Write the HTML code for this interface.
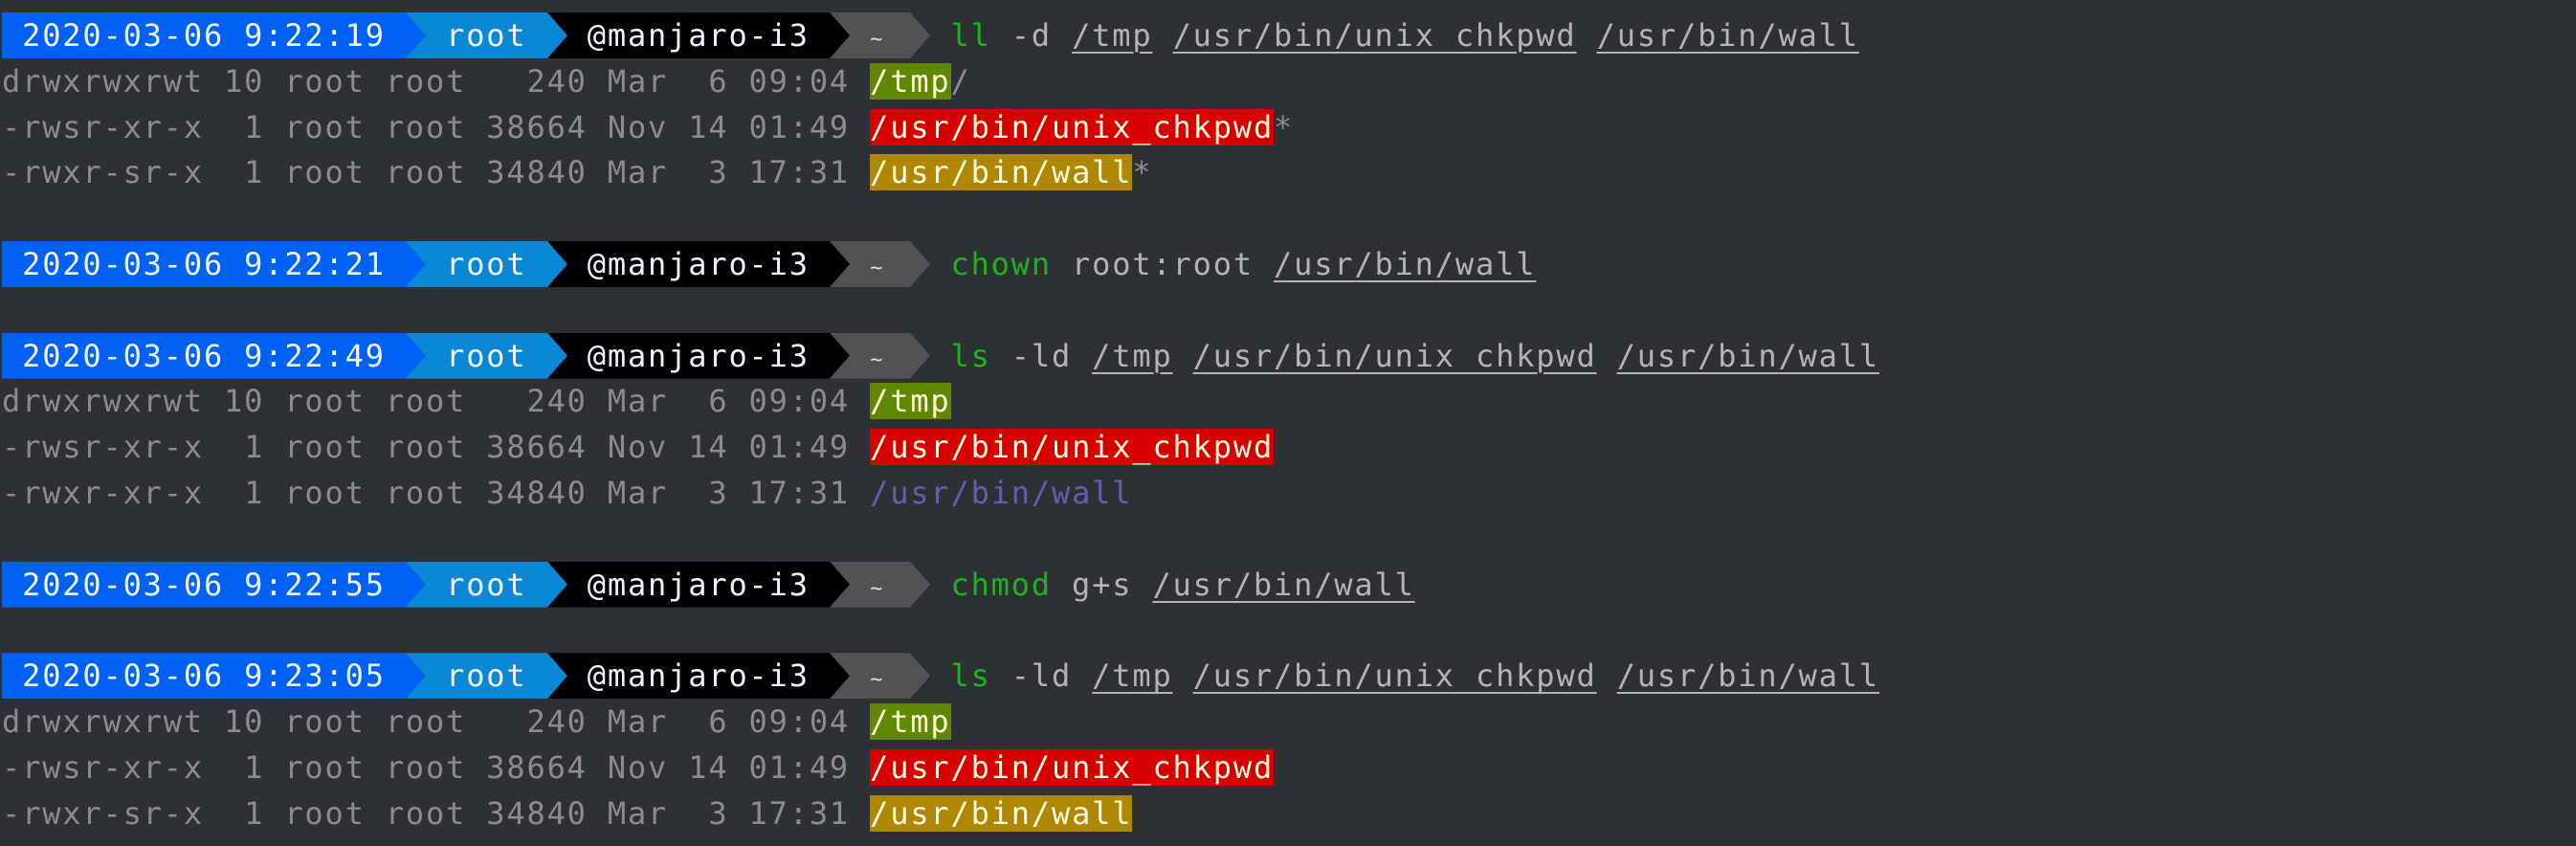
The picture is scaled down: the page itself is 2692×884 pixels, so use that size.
<!DOCTYPE html>
<html><head><meta charset="utf-8"><style>
html,body{margin:0;padding:0;background:#2d3134;width:2692px;height:884px;overflow:hidden}
.l{position:absolute;left:2px;height:48px;line-height:48px;white-space:pre;font-family:"DejaVu Sans Mono","Liberation Mono",monospace;font-size:32px;letter-spacing:1.83px;color:#8c8c8c}
.seg{position:absolute;height:48px}
.g{color:#1fb21f}.a{color:#b4b4b4}.u{text-decoration:underline;text-decoration-thickness:2px;text-underline-offset:6px}
.bt{background:#5f8700;color:#fff8dc}.br{background:#d70000;color:#fff8dc}.by{background:#af8700;color:#fff8dc}
.p{color:#5f5faf}
.pt{color:#f0f4ff}
</style></head><body>
<div id="c"></div>
<script>
const Y=i=>13+47.8*i;
let h='';
function prompt(i,t,cmd){
 const y=Y(i);
 const segs=[[2,424,'#0062f5'],[424,572,'#0a88d6'],[572,867,'#000'],[867,951,'#525252']];
 for(let k=segs.length-1;k>=0;k--){const[s,e,c]=segs[k];const w=e-s+21;
  h+=`<div class="seg" style="top:${y}px;left:${s}px;width:${w}px;background:${c};clip-path:polygon(0 0,${w-21}px 0,${w}px 50%,${w-21}px 100%,0 100%)"></div>`;}
 h+=`<div class="l pt" style="top:${y}px"> ${t}   root   @manjaro-i3   <span style="color:#ddd;font-size:22px;letter-spacing:7.8px">~</span>   ${cmd}</div>`;
}
function line(i,s){h+=`<div class="l" style="top:${Y(i)}px">${s}</div>`;}
const P='<span class="a u">/tmp</span> <span class="a u">/usr/bin/unix_chkpwd</span> <span class="a u">/usr/bin/wall</span>';
prompt(0,'2020-03-06 9:22:19','<span class="g">ll</span><span class="a"> -d </span>'+P);
line(1,'drwxrwxrwt 10 root root   240 Mar  6 09:04 <span class="bt">/tmp</span>/');
line(2,'-rwsr-xr-x  1 root root 38664 Nov 14 01:49 <span class="br">/usr/bin/unix_chkpwd</span>*');
line(3,'-rwxr-sr-x  1 root root 34840 Mar  3 17:31 <span class="by">/usr/bin/wall</span>*');
prompt(5,'2020-03-06 9:22:21','<span class="g">chown</span><span class="a"> root:root </span><span class="a u">/usr/bin/wall</span>');
prompt(7,'2020-03-06 9:22:49','<span class="g">ls</span><span class="a"> -ld </span>'+P);
line(8,'drwxrwxrwt 10 root root   240 Mar  6 09:04 <span class="bt">/tmp</span>');
line(9,'-rwsr-xr-x  1 root root 38664 Nov 14 01:49 <span class="br">/usr/bin/unix_chkpwd</span>');
line(10,'-rwxr-xr-x  1 root root 34840 Mar  3 17:31 <span class="p">/usr/bin/wall</span>');
prompt(12,'2020-03-06 9:22:55','<span class="g">chmod</span><span class="a"> g+s </span><span class="a u">/usr/bin/wall</span>');
prompt(14,'2020-03-06 9:23:05','<span class="g">ls</span><span class="a"> -ld </span>'+P);
line(15,'drwxrwxrwt 10 root root   240 Mar  6 09:04 <span class="bt">/tmp</span>');
line(16,'-rwsr-xr-x  1 root root 38664 Nov 14 01:49 <span class="br">/usr/bin/unix_chkpwd</span>');
line(17,'-rwxr-sr-x  1 root root 34840 Mar  3 17:31 <span class="by">/usr/bin/wall</span>');
document.getElementById('c').innerHTML=h;
</script>
</body></html>
